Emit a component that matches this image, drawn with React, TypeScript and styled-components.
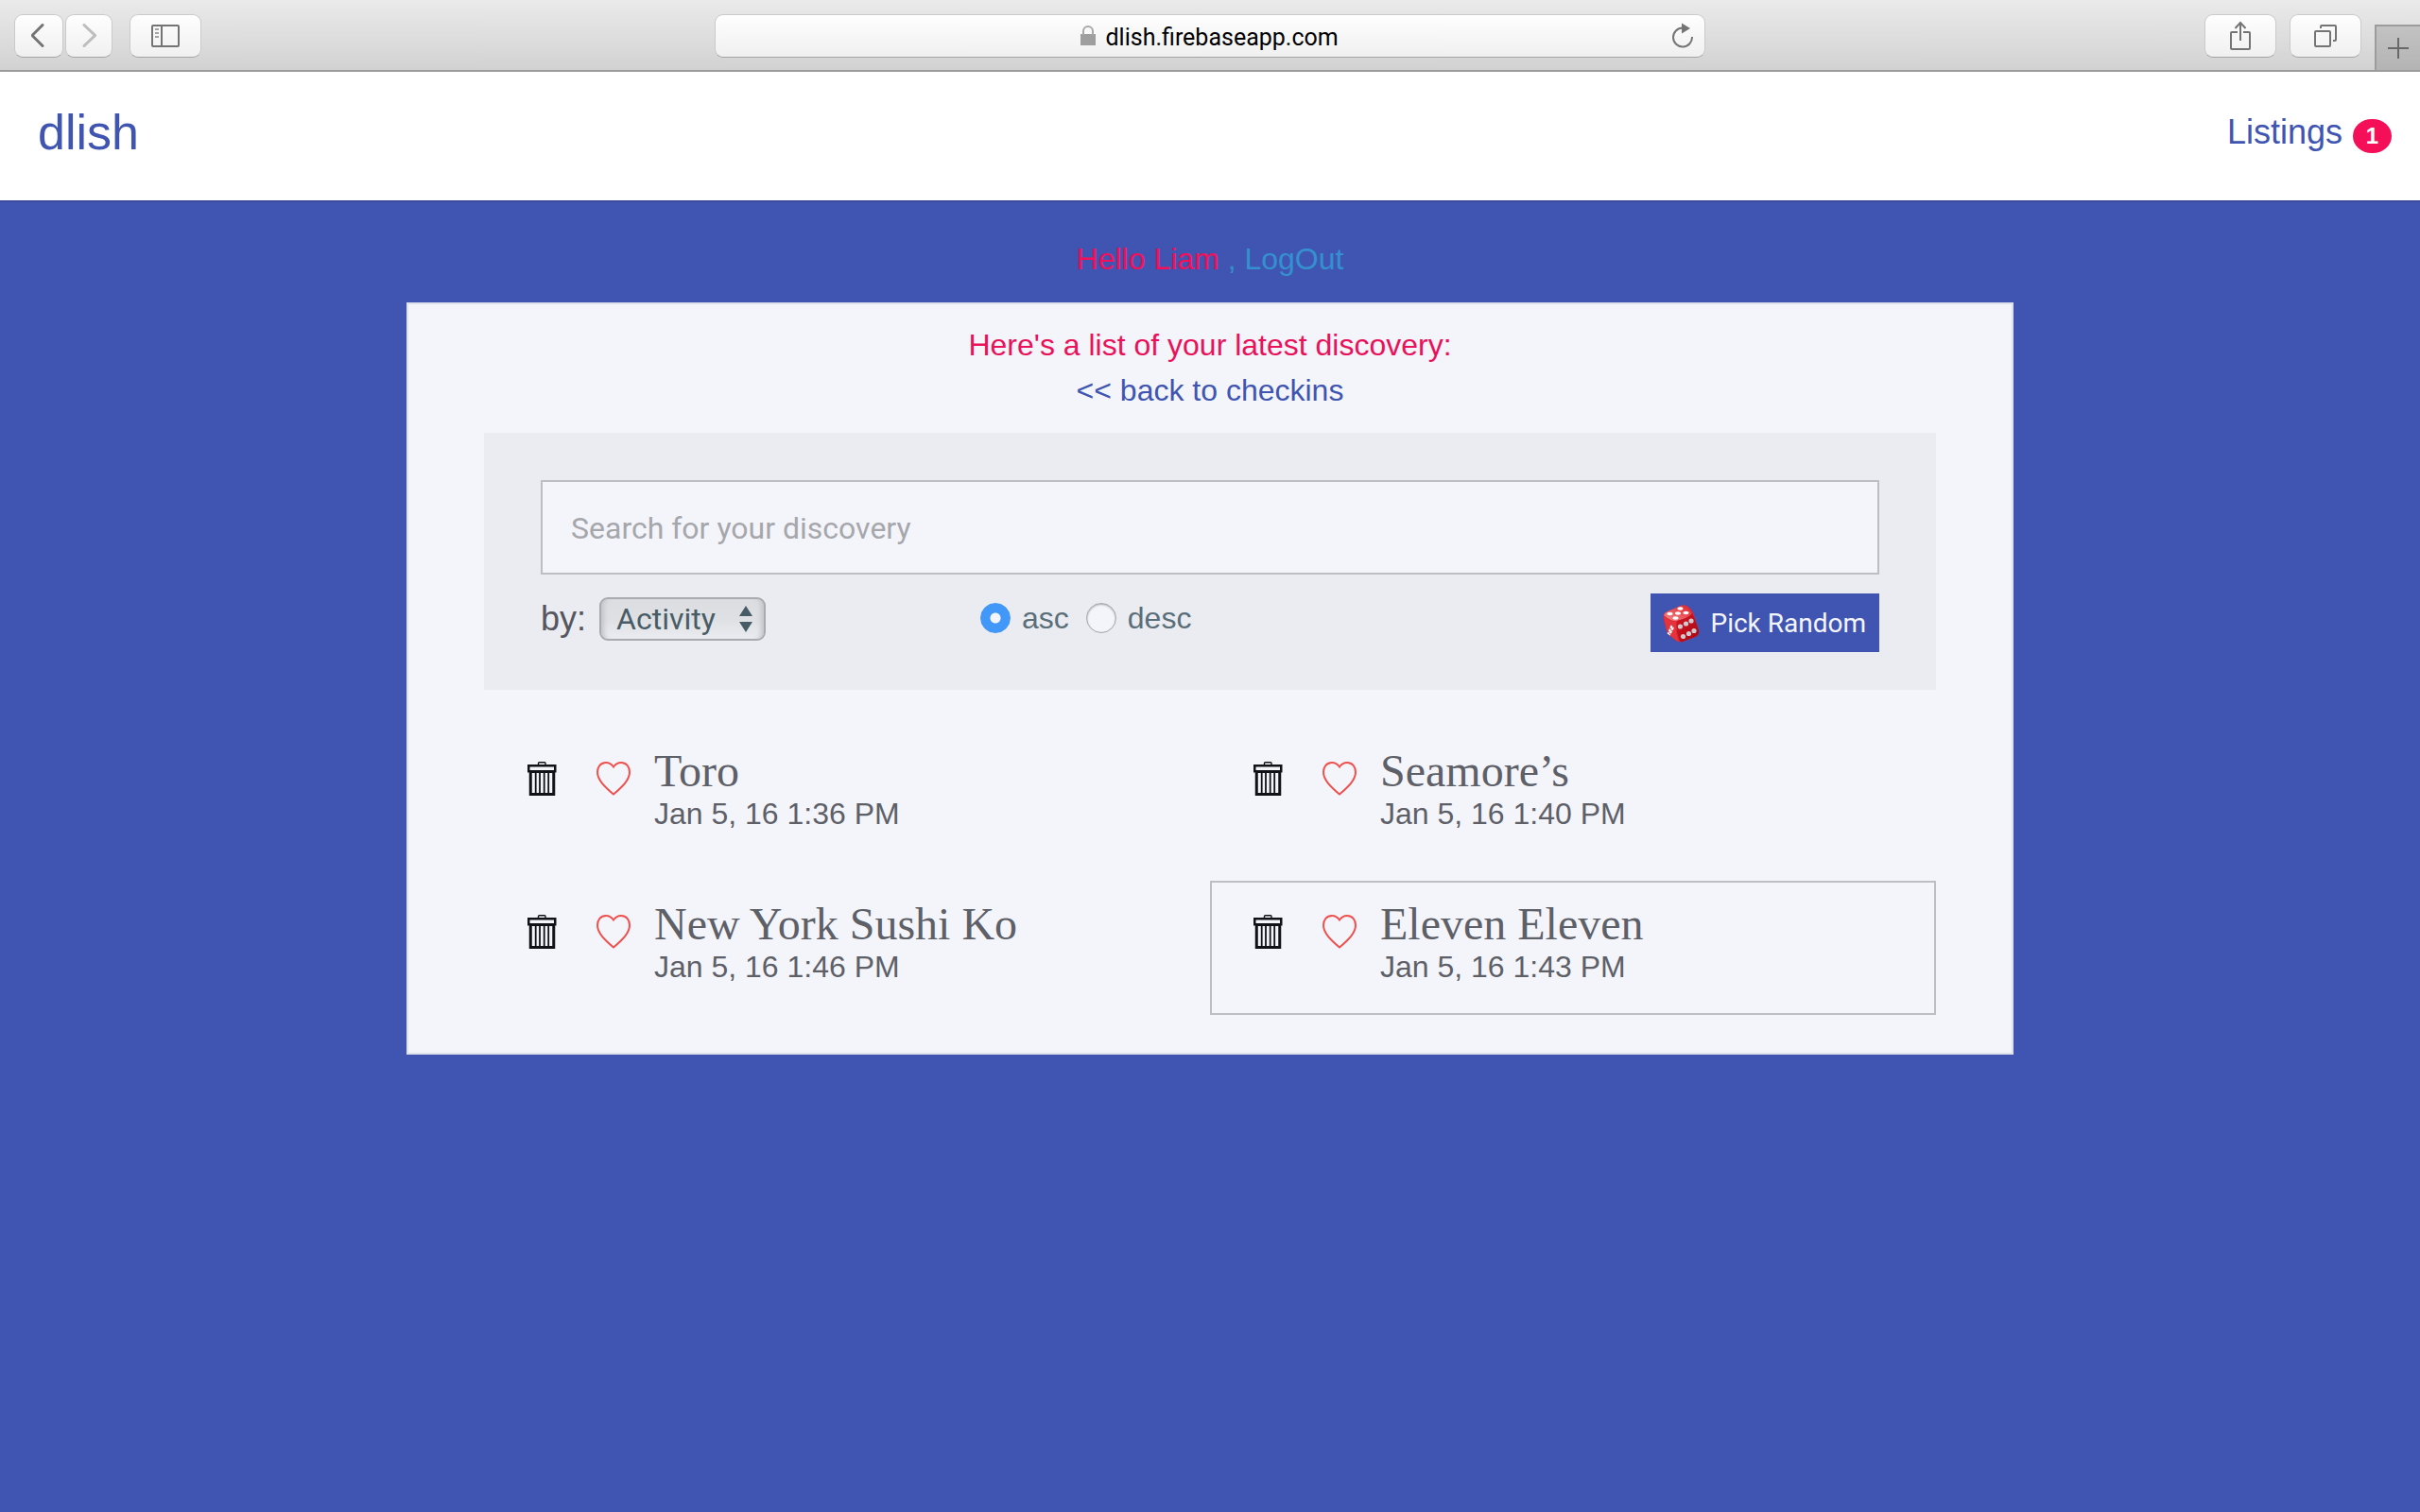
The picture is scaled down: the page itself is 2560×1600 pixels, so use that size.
import React, { useState } from "react";
import styled, { createGlobalStyle } from "styled-components";

const sans = `"Liberation Sans", Arial, sans-serif`;
const system = `Roboto, "Liberation Sans", sans-serif`;
const serif = `"Liberation Serif", "Times New Roman", serif`;

const color = {
  indigo: "#4055b2",
  paper: "#f4f5fb",
  panel: "#ebecf1",
  pink: "#f50f58",
  line: "#bcbec4",
  ink: "#5e6068",
  slate: "#485c66",
  chrome: "#747474",
};

const GlobalStyle = createGlobalStyle`
  *, *::before, *::after { box-sizing: border-box; }
  html { background: ${color.indigo}; }
  body { margin: 0; font-family: ${sans}; font-size: 32px; line-height: 48px; color: ${color.ink}; }
  h1, h2, p, ul { margin: 0; padding: 0; font-weight: 400; }
  button, input, select { font: inherit; color: inherit; margin: 0; }
  a { text-decoration: none; }
  svg { display: block; flex: none; }
`;

/* Browser bar */

const BrowserBar = styled.div`
  display: grid;
  grid-template-columns: 1fr minmax(0, 1048px) 1fr;
  background: linear-gradient(#eaeaea, #d2d2d2);
  border-bottom: 2px solid #9c9c9c;
`;

const BarGroup = styled.div`
  display: flex;
  align-items: flex-start;
  padding: 15px 0 13px 15px;
  gap: 18px;
`;

const BarActions = styled.div`
  display: flex;
  align-items: flex-end;
  justify-content: flex-end;
  gap: 14px;
`;

const Pair = styled.div`
  display: flex;
  gap: 2px;
`;

const BarButton = styled.button<{ $width: number; $raised?: boolean }>`
  display: flex;
  align-items: center;
  justify-content: center;
  width: ${(p) => p.$width}px;
  height: 46px;
  margin-bottom: ${(p) => (p.$raised ? 13 : 0)}px;
  padding: 0;
  color: ${color.chrome};
  background: linear-gradient(#fefefe, #f0f0f0);
  border: 1px solid #cacaca;
  border-bottom-color: #a2a2a2;
  border-radius: 9px;
  &:disabled {
    color: #bdbdbd;
  }
`;

const AddressBar = styled.div`
  display: grid;
  grid-template-columns: 1fr auto 1fr;
  align-items: center;
  height: 46px;
  margin-top: 15px;
  padding: 0 10px;
  background: linear-gradient(#fefefe, #f0f0f0);
  border: 1px solid #cacaca;
  border-bottom-color: #a2a2a2;
  border-radius: 9px;
`;

const AddressField = styled.label`
  grid-column: 2;
  display: flex;
  align-items: center;
  gap: 11px;
`;

const AddressInput = styled.input`
  width: 248px;
  height: 34px;
  padding: 2px 0 0;
  border: 0;
  outline: 0;
  background: transparent;
  color: #000;
  font-family: ${system};
  font-size: 25px;
  line-height: 32px;
`;

const ReloadButton = styled.button`
  justify-self: end;
  padding: 0;
  border: 0;
  background: none;
  color: ${color.chrome};
`;

const NewTab = styled.button`
  display: flex;
  align-items: center;
  justify-content: center;
  width: 48px;
  height: 48px;
  padding: 0;
  color: #686868;
  background: linear-gradient(#c2c2c2, #b4b4b4);
  border: solid #9c9c9c;
  border-width: 2px 0 0 2px;
`;

/* Site header */

const SiteHeader = styled.header`
  display: flex;
  align-items: center;
  justify-content: space-between;
  height: 136px;
  padding: 0 30px 8px 40px;
  background: #fff;
  box-shadow: 0 1px 2px rgba(0, 0, 0, 0.25);
`;

const Brand = styled.a`
  color: ${color.indigo};
  font-size: 52px;
  line-height: 58px;
`;

const NavLink = styled.a`
  display: flex;
  align-items: center;
  gap: 11px;
  color: ${color.indigo};
  font-size: 36px;
  line-height: 40px;
`;

const Badge = styled.span`
  width: 41px;
  margin-top: 8px;
  border-radius: 20px / 18px;
  background: ${color.pink};
  color: #fff;
  font-size: 24px;
  font-weight: 700;
  line-height: 36px;
  text-align: center;
`;

/* Page */

const Greeting = styled.p`
  padding: 38px 0 22px;
  text-align: center;
  color: #3590cf;
`;

const UserName = styled.span`
  color: ${color.pink};
`;

const TextLink = styled.a<{ $color: string }>`
  color: ${(p) => p.$color};
`;

const Card = styled.main`
  max-width: 1700px;
  margin: 0 auto;
  padding: 19px 80px 40px;
  background: ${color.paper};
  border: 2px solid #dfe1ea;
  box-shadow: 0 2px 0 #354390;
`;

const CardHeading = styled.div`
  margin-bottom: 21px;
  text-align: center;
`;

const CardTitle = styled.h1`
  color: #e9125a;
  font-size: 32px;
  line-height: 48px;
`;

const SearchPanel = styled.form`
  display: grid;
  gap: 20px;
  padding: 50px 60px 40px;
  background: ${color.panel};
`;

const SearchInput = styled.input`
  width: 100%;
  height: 100px;
  padding: 2px 30px 0;
  background: ${color.paper};
  border: 2px solid ${color.line};
  border-radius: 0;
  outline: 0;
  font-family: ${system};
  &::placeholder {
    color: #a6a7ab;
    opacity: 1;
  }
`;

const Controls = styled.div`
  display: grid;
  grid-template-columns: minmax(0, 465px) 1fr auto;
  align-items: start;
`;

const SortField = styled.div`
  display: flex;
  align-items: center;
  gap: 14px;
  height: 54px;
`;

const SortLabel = styled.label`
  color: #55565f;
  font-size: 36px;
`;

const SelectBox = styled.div`
  position: relative;
  color: ${color.slate};
  svg {
    position: absolute;
    right: 14px;
    top: 9px;
    pointer-events: none;
  }
`;

const Select = styled.select`
  appearance: none;
  display: block;
  width: 176px;
  height: 46px;
  padding: 0 40px 0 16px;
  border: 2px solid #a9abb0;
  border-radius: 9px;
  outline: 0;
  background: linear-gradient(#dcdde0, #dfe0e3 50%, #ebecf1);
  box-shadow: inset 7px 0 5px -4px #c3c5ca, inset -7px 0 5px -4px #c3c5ca;
  font-family: ${system};
  font-size: 32px;
  line-height: 42px;
`;

const RadioGroup = styled.div`
  display: flex;
  align-items: center;
  gap: 18px;
  height: 52px;
`;

const RadioLabel = styled.label`
  display: flex;
  align-items: center;
  gap: 12px;
  color: #5a6f79;
`;

const Radio = styled.input`
  appearance: none;
  width: 32px;
  height: 32px;
  border: 1px solid #a4a6aa;
  border-radius: 50%;
  background: ${color.paper};
  box-shadow: inset 0 1px 2px rgba(0, 0, 0, 0.3);
  &:checked {
    border-color: #4298f8;
    box-shadow: none;
    background: radial-gradient(circle, ${color.paper} 5px, #4298f8 6px);
  }
`;

const RandomButton = styled.button`
  display: flex;
  align-items: center;
  gap: 11px;
  height: 62px;
  padding: 2px 14px 0 13px;
  border: 0;
  background: ${color.indigo};
  color: ${color.paper};
  font-family: ${system};
  font-size: 28px;
`;

const Listings = styled.ul`
  display: grid;
  grid-template-columns: 1fr 1fr;
  row-gap: 20px;
  margin-top: 40px;
  list-style: none;
`;

const Listing = styled.li<{ $picked: boolean }>`
  display: flex;
  align-items: flex-start;
  padding: 20px 44px 28px;
  border: 2px solid ${(p) => (p.$picked ? color.line : "transparent")};
`;

const IconButton = styled.button<{ $gap: number }>`
  margin: 14px ${(p) => p.$gap}px 0 0;
  padding: 0;
  border: 0;
  background: none;
`;

const ListingName = styled.h2`
  font-family: ${serif};
  font-size: 48px;
  line-height: 48px;
`;

const ListingDate = styled.p`
  line-height: 42px;
`;

/* Icons */

const Chevron = ({ back }: { back?: boolean }) => (
  <svg width="16" height="26" viewBox="0 0 16 26" fill="none" stroke="currentColor" strokeWidth="3" strokeLinecap="round">
    <path d={back ? "M12 1.500 1 12.500 12 23.500" : "M3 1.500 14.500 12.500 3 23.500"} />
  </svg>
);

const SidebarIcon = () => (
  <svg width="30" height="24" viewBox="0 0 30 24" fill="none" stroke="currentColor" strokeWidth="2">
    <rect x="1" y="1" width="28" height="22" rx="1" />
    <path d="M11 1V23" />
    <path d="M4 5H8M4 9H8M4 13H8" opacity=".65" />
  </svg>
);

const LockIcon = () => (
  <svg width="16" height="22" viewBox="0 0 16 22">
    <path d="M0 9H16V21H0Z" fill="#9e9e9e" />
    <path d="M3 10V6A5 5 0 0 1 13 6V10" fill="none" stroke="#a8a8a8" strokeWidth="2" />
  </svg>
);

const ReloadIcon = () => (
  <svg width="24" height="28" viewBox="0 0 24 28">
    <path d="M21 15A10 10 0 1 1 11 5.500" fill="none" stroke="currentColor" strokeWidth="2" />
    <path d="M10 0.500 19 6 10 11.500Z" fill="currentColor" />
  </svg>
);

const ShareIcon = () => (
  <svg width="22" height="32" viewBox="0 0 22 32" fill="none" stroke="currentColor" strokeWidth="2">
    <path d="M8 12H2Q1 12 1 13V29Q1 30 2 30H20Q21 30 21 29V13Q21 12 20 12H14" />
    <path d="M11 21V2M5.500 8 11 2 16.500 8" />
  </svg>
);

const TabsIcon = () => (
  <svg width="24" height="24" viewBox="0 0 24 24" fill="none" stroke="currentColor" strokeWidth="2">
    <rect x="1" y="7" width="16" height="16" rx="1" />
    <path d="M7 4V2Q7 1 8 1H22Q23 1 23 2V16Q23 17 22 17H20" />
  </svg>
);

const PlusIcon = () => (
  <svg width="22" height="22" viewBox="0 0 22 22" fill="none" stroke="currentColor" strokeWidth="2">
    <path d="M11 0V22M0 11H22" />
  </svg>
);

const SelectArrows = () => (
  <svg width="14" height="28" viewBox="0 0 14 28" fill="currentColor">
    <path d="M0 11 7 0 14 11ZM0 17H14L7 28Z" />
  </svg>
);

const TrashIcon = () => (
  <svg width="31" height="36" viewBox="0 0 31 36" fill="none" stroke="#111216">
    <path d="M11.500 3V1.500Q11.500 .7 12.500 .7H18Q19 .7 19 1.500V3" strokeWidth="1.400" />
    <rect x="1.250" y="4.250" width="28" height="6" strokeWidth="2.500" />
    <rect x="3.250" y="10.500" width="24.500" height="24" strokeWidth="3" />
    <path d="M8.700 11V34M13 11V34M17.700 11V34M22.200 11V34" strokeWidth="1.800" />
  </svg>
);

const HeartIcon = () => (
  <svg width="36" height="36" viewBox="0 0 36 36" fill="none" stroke="#f0504d" strokeWidth="2">
    <path d="M18 5.500C15.500 2 12.500 1 10 1C4.500 1 1 5.500 1 11C1 19 8 26 18 34.500C28 26 35 19 35 11C35 5.500 31.500 1 26 1C23.500 1 20.500 2 18 5.500Z" />
  </svg>
);

const DiceIcon = () => (
  <svg width="39" height="40" viewBox="0 0 39 40">
    <defs>
      <linearGradient id="diceTop" x1="0" y1="1" x2="1" y2="0">
        <stop offset="0" stopColor="#f58a8c" />
        <stop offset="1" stopColor="#dc1f2a" />
      </linearGradient>
      <linearGradient id="diceFront" x1="0" y1="0" x2="1" y2="1">
        <stop offset="0" stopColor="#d41824" />
        <stop offset="1" stopColor="#a90712" />
      </linearGradient>
    </defs>
    <path d="M1 10Q0 13 1 17L4 27Q5 31 8 33L14 38Q17 40 21 39L34 34Q39 32 38 27L33 11Q31 4 25 1Q22 0 19 1L5 7Q2 8 1 10Z" fill="#d92631" />
    <path d="M1 11Q2 8 5 7L19 1Q22 0 25 1Q28 3 31 10Q28 13 15 17Q9 18 1 11Z" fill="url(#diceTop)" />
    <path d="M15 17Q28 14 31 9Q33 12 38 27Q39 32 34 34L21 39Q18 40 17 36Q14 28 15 17Z" fill="url(#diceFront)" />
    <path d="M1 12Q8 18 14 18Q13 29 17 39Q14 38 8 33Q5 31 4 27Z" fill="#e5333d" />
    <g fill="#fff">
      <ellipse cx="7.500" cy="9.500" rx="3" ry="1.700" />
      <ellipse cx="18.500" cy="4" rx="3" ry="1.700" />
      <ellipse cx="16" cy="9" rx="3" ry="1.700" />
      <ellipse cx="24.500" cy="8.500" rx="3" ry="1.700" />
      <ellipse cx="13.500" cy="14" rx="3" ry="1.700" />
    </g>
    <path d="M9.500 22 5.500 31M11 24 7 32" stroke="#fff" strokeWidth="2" strokeDasharray="3 1" />
    <g fill="#cfcbd0">
      <circle cx="18.500" cy="23" r="2.600" />
      <circle cx="24.500" cy="20" r="2.600" />
      <circle cx="30" cy="17" r="2.600" />
      <circle cx="21.500" cy="33.500" r="2.600" />
      <circle cx="27.500" cy="30.500" r="2.600" />
      <circle cx="33" cy="27.500" r="2.600" />
    </g>
  </svg>
);

const places = [
  { name: "Toro", date: "Jan 5, 16 1:36 PM" },
  { name: "Seamore’s", date: "Jan 5, 16 1:40 PM" },
  { name: "New York Sushi Ko", date: "Jan 5, 16 1:46 PM" },
  { name: "Eleven Eleven", date: "Jan 5, 16 1:43 PM" },
];

export default function App() {
  const [query, setQuery] = useState("");
  const [order, setOrder] = useState("asc");
  const [picked, setPicked] = useState(3);

  return (
    <>
      <GlobalStyle />
      <BrowserBar>
        <BarGroup>
          <Pair>
            <BarButton $width={52} aria-label="Back"><Chevron back /></BarButton>
            <BarButton $width={50} aria-label="Forward" disabled><Chevron /></BarButton>
          </Pair>
          <BarButton $width={76} aria-label="Sidebar"><SidebarIcon /></BarButton>
        </BarGroup>
        <AddressBar>
          <AddressField>
            <LockIcon />
            <AddressInput aria-label="Address" defaultValue="dlish.firebaseapp.com" spellCheck={false} />
          </AddressField>
          <ReloadButton aria-label="Reload"><ReloadIcon /></ReloadButton>
        </AddressBar>
        <BarActions>
          <BarButton $width={76} $raised aria-label="Share"><ShareIcon /></BarButton>
          <BarButton $width={76} $raised aria-label="Tabs"><TabsIcon /></BarButton>
          <NewTab aria-label="New tab"><PlusIcon /></NewTab>
        </BarActions>
      </BrowserBar>

      <SiteHeader>
        <Brand href="#home">dlish</Brand>
        <nav>
          <NavLink href="#listings">Listings<Badge>1</Badge></NavLink>
        </nav>
      </SiteHeader>

      <Greeting>
        <UserName>Hello Liam</UserName> , <TextLink $color="#3590cf" href="#logout">LogOut</TextLink>
      </Greeting>

      <Card>
        <CardHeading>
          <CardTitle>Here's a list of your latest discovery:</CardTitle>
          <TextLink $color={color.indigo} href="#checkins">{"<< back to checkins"}</TextLink>
        </CardHeading>

        <SearchPanel onSubmit={(e) => e.preventDefault()}>
          <SearchInput
            type="text"
            aria-label="Search"
            placeholder="Search for your discovery"
            value={query}
            onChange={(e) => setQuery(e.target.value)}
          />
          <Controls>
            <SortField>
              <SortLabel htmlFor="sort">by:</SortLabel>
              <SelectBox>
                <Select id="sort" defaultValue="Activity">
                  <option>Activity</option>
                  <option>Name</option>
                </Select>
                <SelectArrows />
              </SelectBox>
            </SortField>
            <RadioGroup>
              {["asc", "desc"].map((value) => (
                <RadioLabel key={value}>
                  <Radio type="radio" name="order" checked={order === value} onChange={() => setOrder(value)} />
                  {value}
                </RadioLabel>
              ))}
            </RadioGroup>
            <RandomButton type="button" onClick={() => setPicked(Math.floor(Math.random() * places.length))}>
              <DiceIcon />
              Pick Random
            </RandomButton>
          </Controls>
        </SearchPanel>

        <Listings>
          {places.map((place, i) => (
            <Listing key={place.name} $picked={i === picked}>
              <IconButton $gap={42} aria-label={`Delete ${place.name}`}><TrashIcon /></IconButton>
              <IconButton $gap={25} aria-label={`Like ${place.name}`}><HeartIcon /></IconButton>
              <div>
                <ListingName>{place.name}</ListingName>
                <ListingDate>{place.date}</ListingDate>
              </div>
            </Listing>
          ))}
        </Listings>
      </Card>
    </>
  );
}
